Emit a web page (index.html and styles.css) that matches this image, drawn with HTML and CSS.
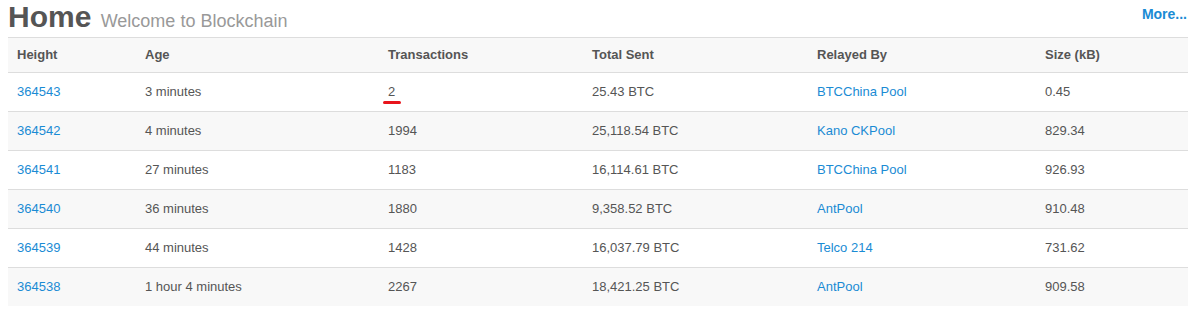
FILE: index.html
```html
<!DOCTYPE html>
<html lang="en">
<head>
  <meta charset="UTF-8">
  <title>Home - Blockchain</title>
  <link rel="stylesheet" href="styles.css">
</head>
<body>
  <div class="container">
    <div class="page-header">
      <h1>Home <small>Welcome to Blockchain</small></h1>
      <a class="more-link" href="#">More...</a>
    </div>

    <table class="blocks-table">
      <thead>
        <tr>
          <th class="col-height">Height</th>
          <th class="col-age">Age</th>
          <th class="col-tx">Transactions</th>
          <th class="col-sent">Total Sent</th>
          <th class="col-relay">Relayed By</th>
          <th>Size (kB)</th>
        </tr>
      </thead>
      <tbody>
        <tr>
          <td><a href="#">364543</a></td>
          <td>3 minutes</td>
          <td><span class="marked">2</span></td>
          <td>25.43 BTC</td>
          <td><a href="#">BTCChina Pool</a></td>
          <td>0.45</td>
        </tr>
        <tr>
          <td><a href="#">364542</a></td>
          <td>4 minutes</td>
          <td>1994</td>
          <td>25,118.54 BTC</td>
          <td><a href="#">Kano CKPool</a></td>
          <td>829.34</td>
        </tr>
        <tr>
          <td><a href="#">364541</a></td>
          <td>27 minutes</td>
          <td>1183</td>
          <td>16,114.61 BTC</td>
          <td><a href="#">BTCChina Pool</a></td>
          <td>926.93</td>
        </tr>
        <tr>
          <td><a href="#">364540</a></td>
          <td>36 minutes</td>
          <td>1880</td>
          <td>9,358.52 BTC</td>
          <td><a href="#">AntPool</a></td>
          <td>910.48</td>
        </tr>
        <tr>
          <td><a href="#">364539</a></td>
          <td>44 minutes</td>
          <td>1428</td>
          <td>16,037.79 BTC</td>
          <td><a href="#">Telco 214</a></td>
          <td>731.62</td>
        </tr>
        <tr>
          <td><a href="#">364538</a></td>
          <td>1 hour 4 minutes</td>
          <td>2267</td>
          <td>18,421.25 BTC</td>
          <td><a href="#">AntPool</a></td>
          <td>909.58</td>
        </tr>
      </tbody>
    </table>
  </div>
</body>
</html>
```

FILE: styles.css
```css
body {
  font-family: "Liberation Sans", Arial, sans-serif;
  font-size: 13px;
  color: #555;
  background: #fff;
  margin: 0;
  padding: 0;
}

a {
  color: #1a8bd4;
  text-decoration: none;
}

.container {
  padding: 0 6px 0 8px;
}

.page-header {
  display: flex;
  justify-content: space-between;
  align-items: flex-start;
  height: 37px;
}

h1 {
  margin: 0;
  font-size: 30px;
  font-weight: bold;
  line-height: 33px;
  color: #555;
}

h1 small {
  font-size: 18px;
  font-weight: normal;
  color: #999;
  margin-left: 1px;
}

.more-link {
  font-size: 14px;
  font-weight: bold;
  margin-top: 6px;
  margin-right: 1px;
}

.blocks-table {
  width: 100%;
  border-collapse: collapse;
  border-top: 1px solid #ddd;
}

.blocks-table th,
.blocks-table td {
  text-align: left;
  padding: 9px 9px;
  line-height: 20px;
  border-bottom: 1px solid #ddd;
}

.blocks-table th {
  padding: 7px 9px 7px;
  font-weight: bold;
  background: #f8f8f8;
}

.blocks-table tbody tr:nth-child(even) td {
  background: #f8f8f8;
}

.blocks-table tbody tr:last-child td {
  border-bottom: none;
}

.col-height { width: 110px; }
.col-age { width: 225px; }
.col-tx { width: 186px; }
.col-sent { width: 207px; }
.col-relay { width: 210px; }

.marked {
  position: relative;
}

.marked::after {
  content: "";
  position: absolute;
  left: -5px;
  right: -6px;
  bottom: -5px;
  height: 3px;
  border-radius: 2px;
  background: #e8141c;
}
```
